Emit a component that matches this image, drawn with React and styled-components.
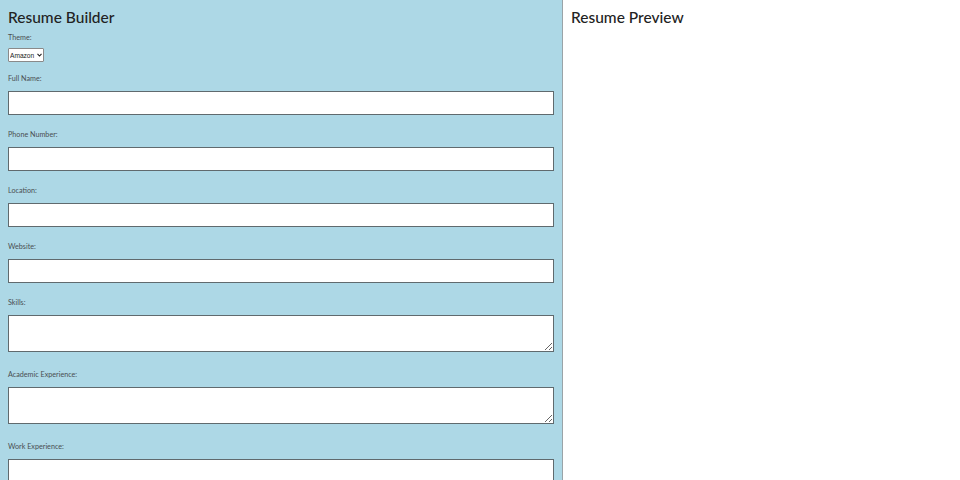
import styled, { createGlobalStyle } from "styled-components";

const GlobalStyle = createGlobalStyle`
  html, body {
    margin: 0;
    padding: 0;
    height: 100%;
    overflow: hidden;
  }
  body {
    font-family: Lato, "Open Sans", sans-serif;
  }
`;

const Page = styled.div`
  display: flex;
  height: 100vh;
`;

const Editor = styled.div`
  width: 546px;
  padding: 4px 8px 0 8px;
  background: #add8e6;
  border-right: 1px solid #9aa4a8;
  overflow: hidden;
`;

const Preview = styled.div`
  flex: 1;
  padding: 4px 8px 0 8px;
  background: #fff;
`;

const Title = styled.h1`
  margin: 0;
  font-size: 15.5px;
  line-height: 26px;
  font-weight: 500;
  color: #222;
`;

const Field = styled.div`
  display: flex;
  flex-direction: column;
  align-items: flex-start;
  margin-bottom: ${(p) => (p.$big ? "17px" : "14px")};
  &:first-of-type {
    margin-top: 2px;
    margin-bottom: 11px;
  }
`;

const Label = styled.label`
  font-size: 7.2px;
  line-height: 11px;
  color: #4a4f52;
  margin-bottom: ${(p) => (p.$tight ? "5px" : "7px")};
`;

const SelectWrap = styled.div`
  position: relative;
  display: inline-block;
`;

const Select = styled.select`
  appearance: none;
  display: block;
  width: 36px;
  height: 14px;
  font-size: 6.6px;
  font-family: "Liberation Sans", Arial, sans-serif;
  padding: 0 0 0 1px;
  border: 1px solid #8a8a8a;
  border-radius: 1px;
  background: #fff;
  color: #222;
`;

const Caret = styled.svg`
  position: absolute;
  right: 2px;
  top: 5px;
  pointer-events: none;
`;

const Input = styled.input`
  box-sizing: border-box;
  width: 100%;
  height: 24px;
  border: 1px solid #606a6e;
  background: #fff;
  margin: 0;
`;

const TextArea = styled.textarea`
  box-sizing: border-box;
  width: 100%;
  height: 37px;
  border: 1px solid #606a6e;
  background: #fff;
  margin: 0;
  display: block;
`;

const fields = [
  { label: "Full Name:", type: "input" },
  { label: "Phone Number:", type: "input" },
  { label: "Location:", type: "input" },
  { label: "Website:", type: "input" },
  { label: "Skills:", type: "textarea" },
  { label: "Academic Experience:", type: "textarea" },
  { label: "Work Experience:", type: "textarea" },
];

const App = () => {
  return (
    <Page>
      <GlobalStyle />
      <Editor>
        <Title>Resume Builder</Title>
        <Field>
          <Label $tight>Theme:</Label>
          <SelectWrap>
            <Select defaultValue="Amazon">
              <option>Amazon</option>
              <option>Google</option>
            </Select>
            <Caret width="5" height="4" viewBox="0 0 5 4">
              <path d="M0.5 0.8 L2.5 3 L4.5 0.8" fill="none" stroke="#222" strokeWidth="1.1" />
            </Caret>
          </SelectWrap>
        </Field>
        {fields.map((f) => (
          <Field key={f.label} $big={f.type === "textarea"}>
            <Label>{f.label}</Label>
            {f.type === "input" ? <Input type="text" /> : <TextArea />}
          </Field>
        ))}
      </Editor>
      <Preview>
        <Title>Resume Preview</Title>
      </Preview>
    </Page>
  );
};

export default App;
